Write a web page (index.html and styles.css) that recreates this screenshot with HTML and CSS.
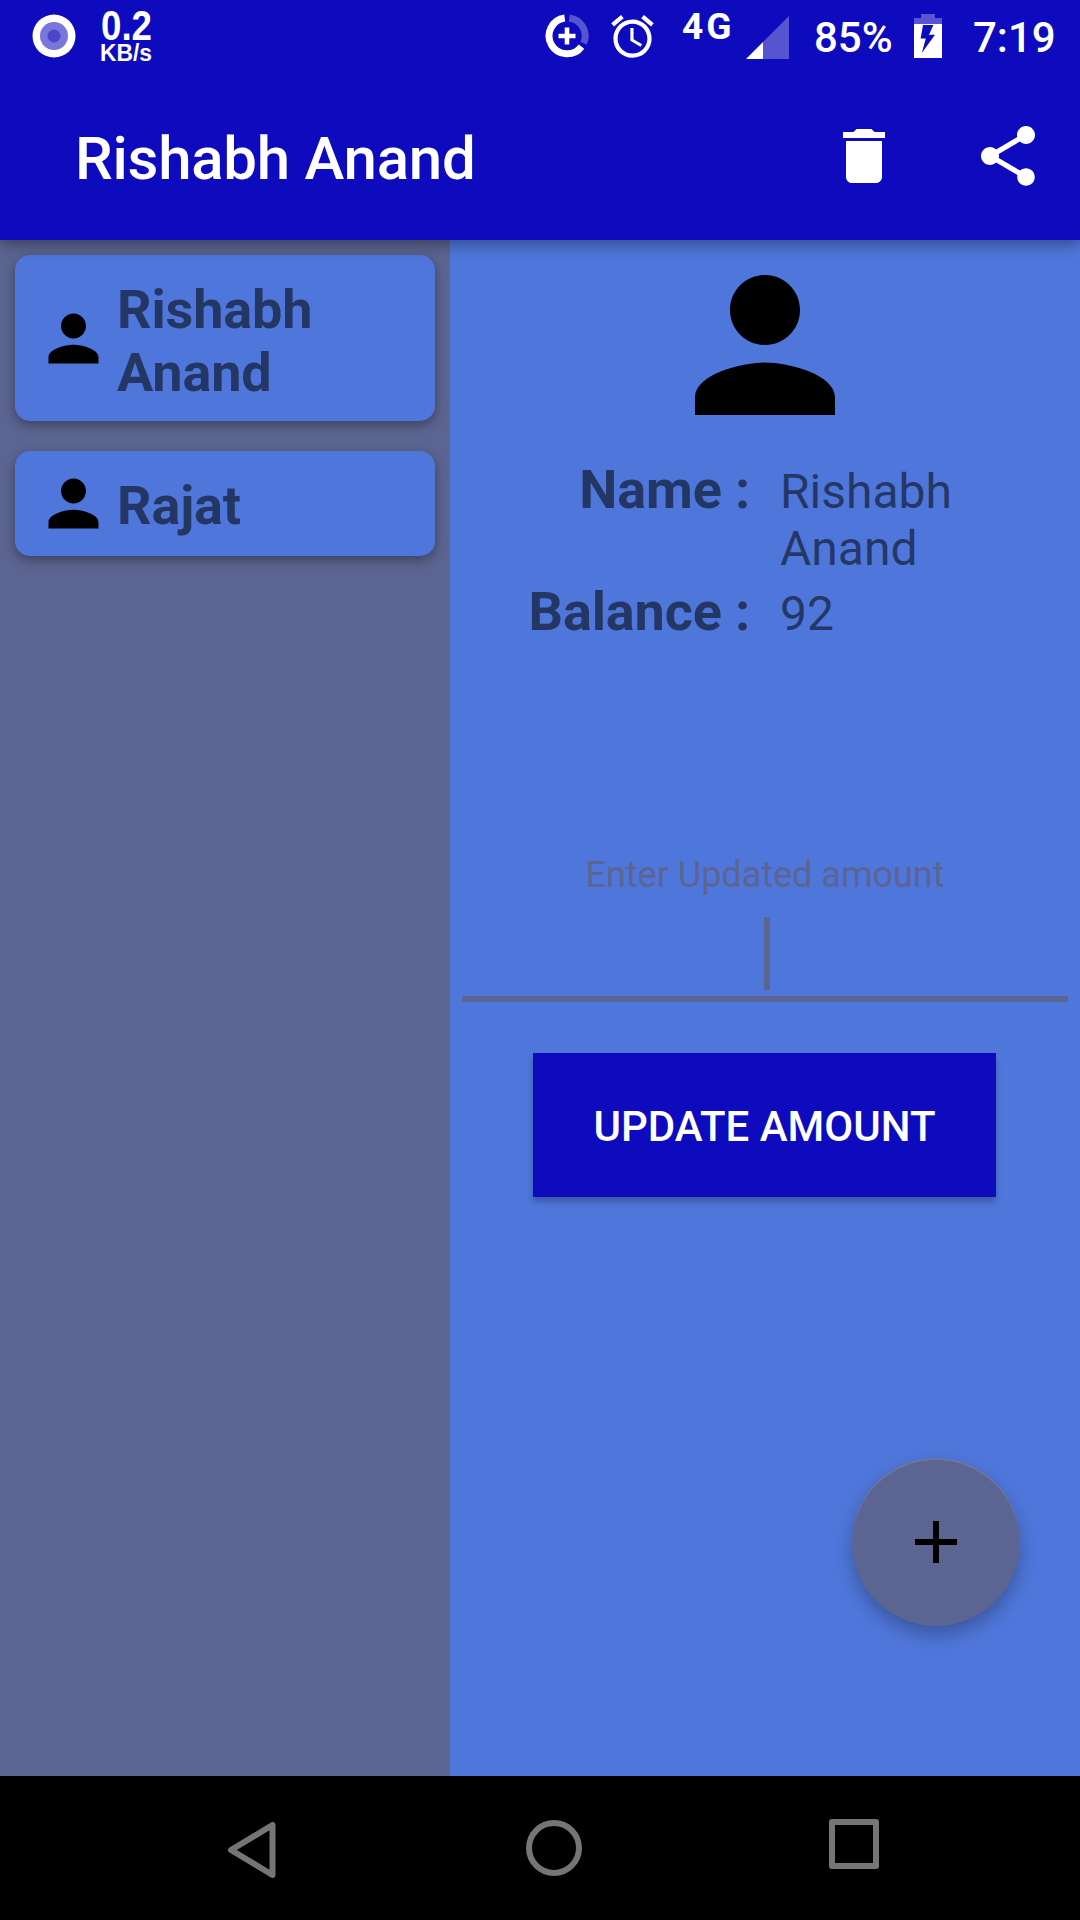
FILE: index.html
```html
<!DOCTYPE html>
<html lang="en">
<head>
<meta charset="utf-8">
<title>Rishabh Anand</title>
<link rel="stylesheet" href="styles.css">
</head>
<body>
<svg class="defs" width="0" height="0" aria-hidden="true">
  <symbol id="person" viewBox="0 0 24 24"><path d="M12 12c2.21 0 4-1.79 4-4s-1.79-4-4-4-4 1.79-4 4 1.79 4 4 4zm0 2c-2.67 0-8 1.34-8 4v2h16v-2c0-2.66-5.33-4-8-4z"/></symbol>
</svg>
<div class="screen">
  <header class="top">
    <div class="status">
      <svg class="recorder" width="44" height="44" viewBox="0 0 44 44"><circle cx="22" cy="22" r="21.5" fill="#fff"/><circle cx="22" cy="22" r="14" fill="#7976dc"/><circle cx="22" cy="22" r="6.5" fill="#4a47cc"/></svg>
      <svg class="speed" width="54" height="72" viewBox="0 0 54 72">
        <text x="1" y="39.5" font-size="42" textLength="51" lengthAdjust="spacingAndGlyphs">0.2</text>
        <text x="0" y="61" font-size="23.5" textLength="52" lengthAdjust="spacingAndGlyphs">KB/s</text>
      </svg>
      <svg class="saver" width="44" height="44" viewBox="0 0 44 44" fill="none" stroke="#fff">
        <path d="M24.3 4A18 18 0 0 1 38.6 29.2" stroke-width="7" opacity=".3"/>
        <path d="M19.7 4A18 18 0 1 0 36.5 32.6" stroke-width="7"/>
        <path d="M22 13.5v17M13.5 22h17" stroke-width="4.6"/>
      </svg>
      <svg class="alarm" width="51" height="51" viewBox="0 0 24 24" fill="#fff"><path d="M22 5.72l-4.6-3.86-1.29 1.53 4.6 3.86L22 5.72zM7.88 3.39L6.6 1.86 2 5.71l1.29 1.53 4.59-3.85zM12.5 8H11v6l4.75 2.85.75-1.23-4-2.37V8zM12 4c-4.97 0-9 4.03-9 9s4.02 9 9 9a9 9 0 0 0 0-18zm0 16c-3.87 0-7-3.13-7-7s3.13-7 7-7 7 3.13 7 7-3.13 7-7 7z"/></svg>
      <span class="network">4G</span>
      <svg class="signal" width="43" height="43" viewBox="0 0 43 43" fill="#fff"><path d="M17 26V43H43V0z" opacity=".3"/><path d="M0 43L17 26V43z"/></svg>
      <span class="percent">85%</span>
      <svg class="battery" width="28" height="44" viewBox="0 0 28 44" fill="#fff"><path d="M7 0h14v4h7v6H0V4h7z" opacity=".3"/><path fill-rule="evenodd" d="M0 10h28v34H0zM9 11L6.6 24.5h5.2L7.8 39 21 20.8h-6L19.4 11z"/></svg>
      <span class="time">7:19</span>
    </div>
    <div class="appbar">
      <h1 class="title">Rishabh Anand</h1>
      <svg width="72" height="72" viewBox="0 0 24 24" fill="#fff"><path d="M6 19c0 1.1.9 2 2 2h8c1.1 0 2-.9 2-2V7H6v12zM19 4h-3.5l-1-1h-5l-1 1H5v2h14V4z"/></svg>
      <svg width="72" height="72" viewBox="0 0 24 24" fill="#fff"><path d="M18 16.08c-.76 0-1.44.3-1.96.77L8.91 12.7c.05-.23.09-.46.09-.7s-.04-.47-.09-.7l7.05-4.11c.54.5 1.25.81 2.04.81 1.66 0 3-1.34 3-3s-1.34-3-3-3-3 1.34-3 3c0 .24.04.47.09.7L8.04 9.81C7.5 9.31 6.79 9 6 9c-1.66 0-3 1.34-3 3s1.34 3 3 3c.79 0 1.5-.31 2.04-.81l7.12 4.16c-.05.21-.08.43-.08.65 0 1.61 1.31 2.92 2.92 2.92s2.92-1.31 2.92-2.92-1.31-2.92-2.92-2.92z"/></svg>
    </div>
  </header>
  <main class="content">
    <nav class="people">
      <a class="card"><svg width="75" height="75"><use href="#person"/></svg><span class="card-name">Rishabh Anand</span></a>
      <a class="card"><svg width="75" height="75"><use href="#person"/></svg><span class="card-name">Rajat</span></a>
    </nav>
    <section class="detail">
      <svg class="avatar" width="210" height="210"><use href="#person"/></svg>
      <dl class="facts">
        <dt>Name :</dt><dd>Rishabh Anand</dd>
        <dt>Balance :</dt><dd>92</dd>
      </dl>
      <div class="field">
        <label class="hint">Enter Updated amount</label>
        <span class="caret"></span>
      </div>
      <button class="update">UPDATE AMOUNT</button>
      <button class="fab" aria-label="Add"><svg width="72" height="72" viewBox="0 0 24 24"><path d="M19 13h-6v6h-2v-6H5v-2h6V5h2v6h6v2z"/></svg></button>
    </section>
  </main>
  <footer class="navbar">
    <svg class="back" width="50" height="58" viewBox="0 0 50 58"><path d="M45.5 4v50L4 29z"/></svg>
    <svg class="home" width="56" height="56" viewBox="0 0 56 56"><circle cx="28" cy="28" r="25"/></svg>
    <svg class="recent" width="50" height="50" viewBox="0 0 50 50"><path d="M3 3h44v44H3z"/></svg>
  </footer>
</div>
</body>
</html>
```
FILE: styles.css
```css
* { box-sizing: border-box; margin: 0; padding: 0; }
body { width: 1080px; height: 1920px; overflow: hidden; font-family: Roboto, sans-serif; background: #000; }
svg { display: block; flex: none; }
.defs { position: absolute; }
.screen { display: flex; flex-direction: column; width: 1080px; height: 1920px; }

.top { position: relative; z-index: 1; height: 240px; background: #0d0bbd; color: #fff; box-shadow: 0 4px 14px rgba(0, 0, 0, .38); }
.status { display: flex; align-items: flex-start; height: 72px; padding-left: 32px; font-weight: 500; white-space: nowrap; }
.recorder { margin-top: 14px; }
.speed { margin-left: 24px; fill: #fff; font-family: "Liberation Sans", sans-serif; font-weight: 700; }
.saver { margin: 14px 0 0 391px; }
.alarm { margin: 11px 0 0 18px; }
.network { width: 64px; margin: 5px 0 0 24px; font-size: 37px; line-height: 44px; font-weight: 700; letter-spacing: 3px; }
.signal { margin-top: 16px; }
.percent { width: 100px; margin: 13px 0 0 25px; font-size: 42px; line-height: 49px; }
.battery { margin-top: 14px; }
.time { margin: 13px 0 0 31px; font-size: 42px; line-height: 49px; }

.appbar { display: flex; align-items: center; gap: 72px; height: 168px; padding: 0 36px 0 75px; }
.title { flex: 1; font-size: 60px; line-height: 70px; font-weight: 500; letter-spacing: -.25px; padding-top: 6px; }

.content { display: flex; height: 1536px; }
.people { display: flex; flex-direction: column; gap: 30px; width: 450px; padding: 15px; background: #5c6591; }
.card { display: flex; align-items: center; gap: 6px; min-height: 105px; padding: 15px 15px 15px 21px; border-radius: 15px; background: #4f76da; box-shadow: 0 4px 12px rgba(0, 0, 0, .36); }
.card-name { padding: 6px 0 3px; font-size: 54px; line-height: 63px; font-weight: 700; letter-spacing: -.15px; color: rgba(0, 0, 0, .54); }
.card:first-child { height: 166px; }
.card:first-child .card-name { padding-top: 8px; }

.detail { position: relative; display: flex; flex-direction: column; align-items: center; width: 630px; background: #4f76da; }
.facts { display: grid; grid-template-columns: 300px 1fr; column-gap: 30px; width: 100%; height: 198px; padding: 8px 60px 0 0; align-content: start; color: rgba(0, 0, 0, .54); }
.facts dt { height: 122px; font-size: 54px; line-height: 63px; font-weight: 700; letter-spacing: -.15px; text-align: right; }
.facts dd { padding-top: 5px; font-size: 48px; line-height: 57px; }
.field { display: flex; flex-direction: column; align-items: center; width: 606px; height: 162px; margin-top: 192px; border-bottom: 6px solid #5c6591; color: #5c6591; }
.hint { padding-top: 14px; font-size: 36px; line-height: 42px; }
.caret { width: 6px; height: 73px; margin: 21px 0 0 4px; background: #5c6591; }
.update { width: 463px; height: 144px; margin: 51px 1px 0 0; padding-top: 2px; border: 0; background: #0d0bbd; color: #fff; font: 500 42px/49px Roboto, sans-serif; box-shadow: 0 5px 6px rgba(0, 0, 0, .24); }
.fab { position: absolute; right: 60px; bottom: 150px; display: flex; align-items: center; justify-content: center; width: 168px; height: 168px; border: 0; border-radius: 50%; background: #5c6591; box-shadow: inset 0 2px 1px rgba(255, 255, 255, .12), 0 9px 18px rgba(0, 0, 0, .26); }

.navbar { display: flex; height: 144px; padding: 43px 0 0 227px; fill: none; stroke: #757575; stroke-width: 6; stroke-linejoin: round; }
.back { margin-top: 2px; }
.home { margin: 1px 0 0 249px; }
.recent { margin-left: 247px; }
```
